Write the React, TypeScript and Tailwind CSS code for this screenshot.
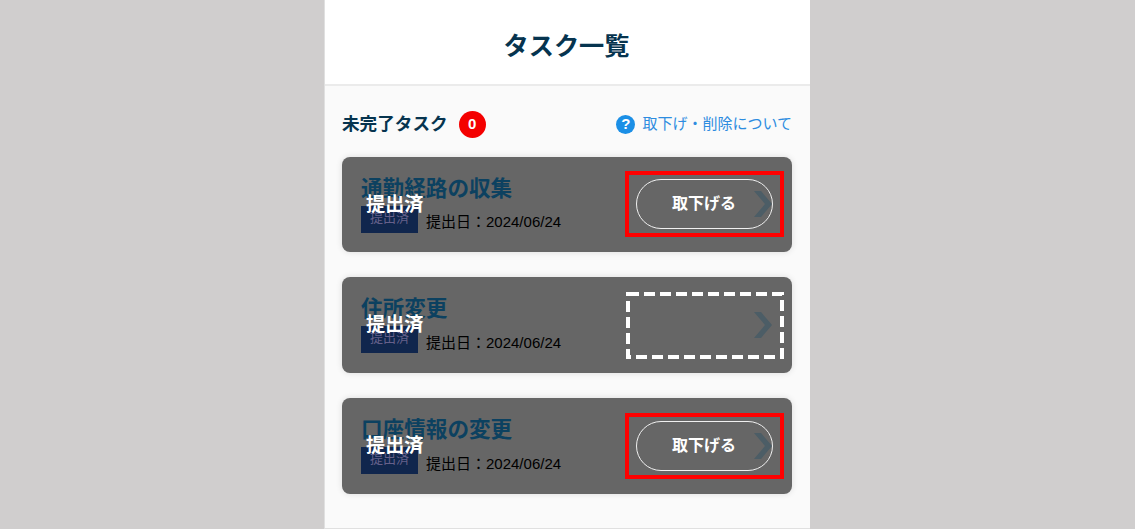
import React from 'react';

const tasks = [
  { id: 1, title: '通勤経路の収集', canWithdraw: true },
  { id: 2, title: '住所変更', canWithdraw: false },
  { id: 3, title: '口座情報の変更', canWithdraw: true },
];

const Chevron = () => (
  <svg viewBox="0 0 18 26" className="absolute right-[20px] top-1/2 -translate-y-1/2 w-[18px] h-[26px]">
    <path d="M0 0h7l11 13L7 26H0l11-13z" fill="#4c5d66" />
  </svg>
);

const TaskCard = ({ title, canWithdraw }: { title: string; canWithdraw: boolean }) => (
  <div className="relative h-[95.5px] rounded-lg bg-[#666666] shadow-[0_0_6px_rgba(0,0,0,0.12)] pl-[19px] pt-[18px]">
    <h2 className="text-[21.6px] leading-[28px] font-bold text-[#0c4160]">{title}</h2>
    <div className="flex items-center mt-[3px]">
      <span className="w-[57px] h-[27px] bg-[#10264d] text-[#66608a] text-[13px] leading-[24px] text-center">提出済</span>
      <span className="ml-2 text-[15px] leading-[20px] text-black mt-[6px]">提出日：2024/06/24</span>
    </div>
    <span className="absolute left-[24px] top-[36px] text-[19.2px] leading-[24px] font-bold text-white">提出済</span>
    <Chevron />
    {canWithdraw ? (
      <div className="absolute left-[283px] top-[14.5px] w-[159px] h-[66px] border-[4px] border-[#ff0000] flex items-center justify-center">
        <button className="w-[137px] h-[50px] mr-[1px] rounded-full border-[1.5px] border-[#f0f0f0] text-white text-[16px] font-bold">
          取下げる
        </button>
      </div>
    ) : (
      <svg className="absolute left-[284px] top-[15px] w-[158px] h-[67px]" viewBox="0 0 158 67" fill="none">
        <rect x="2" y="2" width="154" height="63" stroke="#ffffff" strokeWidth="4" strokeDasharray="11 5" />
      </svg>
    )}
  </div>
);

export default function App() {
  return (
    <div
      className="h-[529px] bg-[#d0cece] flex overflow-hidden pl-[324px]"
      style={{ fontFamily: '"Liberation Sans", "Noto Sans CJK JP", sans-serif' }}
    >
      <div className="w-[486px] bg-[#fafafa] border-l border-b border-[#e0e0e0]">
        <header className="h-[86px] bg-white border-b-2 border-[#ebebeb] flex items-center justify-center pt-[9px]">
          <h1 className="text-[25.2px] font-bold text-[#06344f] mr-[2px]">タスク一覧</h1>
        </header>
        <div className="pl-[17px] pr-[18px] pt-[25px]">
          <div className="flex items-center justify-between h-[26px] mb-[19.7px]">
            <div className="flex items-center">
              <span className="text-[17.6px] font-bold text-[#06344f]">未完了タスク</span>
              <span className="ml-[11px] w-[27px] h-[27px] rounded-full bg-[#f40000] text-white text-[15px] font-bold flex items-center justify-center">
                0
              </span>
            </div>
            <a className="flex items-center text-[15px] text-[#2d8ce0]">
              <span className="w-[19px] h-[19px] rounded-full bg-[#1b8fe6] text-white text-[15px] font-bold flex items-center justify-center mr-[7px]">
                ?
              </span>
              取下げ・削除について
            </a>
          </div>
          <div className="flex flex-col gap-[25.3px]">
            {tasks.map((t) => (
              <TaskCard key={t.id} title={t.title} canWithdraw={t.canWithdraw} />
            ))}
          </div>
        </div>
      </div>
    </div>
  );
}
